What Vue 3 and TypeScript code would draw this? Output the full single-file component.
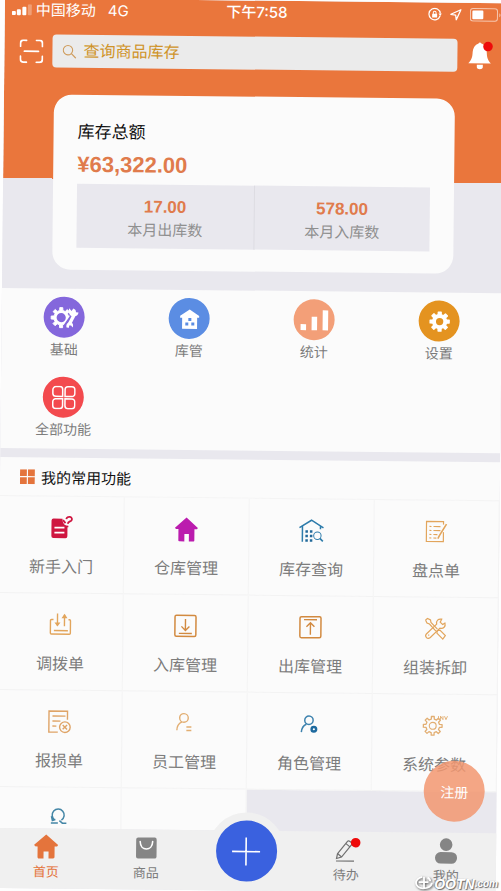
<script setup lang="ts">
import { ref } from 'vue'

interface Item {
  id: string
  label: string
}

const keyword = ref<string>('')

const stats: { value: string; label: string }[] = [
  { value: '17.00', label: '本月出库数' },
  { value: '578.00', label: '本月入库数' },
]

const shortcuts: Item[] = [
  { id: 'basic', label: '基础' },
  { id: 'store', label: '库管' },
  { id: 'chart', label: '统计' },
  { id: 'setting', label: '设置' },
  { id: 'all', label: '全部功能' },
]

const features: Item[] = [
  { id: 'guide', label: '新手入门' },
  { id: 'house', label: '仓库管理' },
  { id: 'query', label: '库存查询' },
  { id: 'check', label: '盘点单' },
  { id: 'transfer', label: '调拨单' },
  { id: 'inbound', label: '入库管理' },
  { id: 'outbound', label: '出库管理' },
  { id: 'assemble', label: '组装拆卸' },
  { id: 'damage', label: '报损单' },
  { id: 'staff', label: '员工管理' },
  { id: 'role', label: '角色管理' },
  { id: 'params', label: '系统参数' },
  { id: 'reset', label: '' },
  { id: 'blank', label: '' },
]

// Outline of a cog centred on (12, 12)
function cog(teeth: number, outer: number, inner: number): string {
  const step = (Math.PI * 2) / teeth
  const points: string[] = []
  for (let i = 0; i < teeth; i++) {
    const a = i * step - Math.PI / 2
    const corners: [number, number][] = [
      [-0.28, inner],
      [-0.19, outer],
      [0.19, outer],
      [0.28, inner],
    ]
    for (const [offset, r] of corners) {
      const t = a + offset * step
      points.push(`${(12 + r * Math.cos(t)).toFixed(2)} ${(12 + r * Math.sin(t)).toFixed(2)}`)
    }
  }
  return `M${points.join('L')}Z`
}

const cogPath = cog(8, 11, 8)
</script>

<template>
  <div class="page">
    <div class="phone">
      <main class="content">
        <header class="hero">
          <div class="status">
            <span class="status-group">
              <svg class="signal" viewBox="0 0 20 12" aria-hidden="true">
                <rect x="0" y="7" width="4" height="4" rx="1" fill="#fff" />
                <rect x="5" y="5" width="4" height="6" rx="1" fill="#fff" />
                <rect x="10.500" y="2.500" width="4" height="8.500" rx="1" fill="#fff" />
                <rect x="16" y="0" width="4" height="11" rx="1" fill="#fff" opacity=".3" />
              </svg>
              <span class="carrier">中国移动</span>
              <span>4G</span>
            </span>
            <span class="time">下午7:58</span>
            <span class="status-group status-icons">
              <svg class="lock" viewBox="0 0 14 14" fill="none" stroke="#fff" aria-hidden="true">
                <path d="M12.300 8.200A5.700 5.700 0 1 1 12.500 6" stroke-width="1.200" />
                <path d="M10.600 6h3.400l-1.600 2.400z" fill="#fff" stroke="none" />
                <rect x="4.300" y="6.300" width="5" height="3.800" rx=".5" fill="#fff" stroke="none" />
                <path d="M5.400 6.500V5.200a1.400 1.400 0 0 1 2.800 0v1.300" />
              </svg>
              <svg class="arrow" viewBox="0 0 12 12" fill="none" stroke="#fff" stroke-width="1.300" stroke-linejoin="round" aria-hidden="true">
                <path d="M11 1L1 5.600l4.800.7.700 4.800z" />
              </svg>
              <svg class="battery" viewBox="0 0 32 14" aria-hidden="true">
                <rect x=".6" y=".6" width="27" height="12.500" rx="2.500" fill="none" stroke="#fff" stroke-opacity=".6" />
                <rect x="2.500" y="2.500" width="11" height="8.800" rx="1" fill="#fff" />
                <path d="M29.500 5v4c1.500-.6 1.500-3.400 0-4z" fill="#fff" opacity=".6" />
              </svg>
            </span>
          </div>

          <form class="search-row" @submit.prevent>
            <button type="button" class="icon-button" aria-label="扫一扫">
              <svg class="scan" viewBox="0 0 24 24" fill="none" stroke="#fff" stroke-width="1.800" stroke-linecap="round">
                <path d="M1 7V4a3 3 0 0 1 3-3h3M17 1h3a3 3 0 0 1 3 3v3M23 17v3a3 3 0 0 1-3 3h-3M7 23H4a3 3 0 0 1-3-3v-3M5 12h14" />
              </svg>
            </button>
            <label class="search">
              <svg class="magnifier" viewBox="0 0 14 14" fill="none" stroke="#cf9c5c" stroke-width="1.100" aria-hidden="true">
                <circle cx="5.500" cy="5.500" r="4.700" />
                <path d="M9 9l4.500 4.500" />
              </svg>
              <input v-model="keyword" type="search" placeholder="查询商品库存" aria-label="查询商品库存" />
            </label>
            <button type="button" class="icon-button" aria-label="消息">
              <svg class="bell" viewBox="0 0 28 30">
                <path d="M12 2.500c.5-1.300 2.300-1.300 2.800 0 3.600 1.300 5.200 4.500 5.500 8.700.2 5 1 8 4.200 11.300H2c3.200-3.300 4-6.300 4.200-11.300C6.500 7 8.300 3.800 12 2.500z" fill="#fff" />
                <path d="M10.500 23.800h6v2.500c0 2.500-6 2.500-6 0z" fill="#fff" />
                <circle cx="21.500" cy="5.500" r="4.800" fill="#ee0a0a" />
              </svg>
            </button>
          </form>

          <section class="card">
            <h1>库存总额</h1>
            <p class="total">¥63,322.00</p>
            <dl class="stats">
              <div v-for="stat in stats" :key="stat.label" class="stat">
                <dd>{{ stat.value }}</dd>
                <dt>{{ stat.label }}</dt>
              </div>
            </dl>
          </section>
        </header>

        <nav class="shortcuts" aria-label="功能分类">
          <a v-for="item in shortcuts" :key="item.id" href="#" class="shortcut">
            <span class="badge" :class="item.id">
              <svg v-if="item.id === 'basic'" class="wide" viewBox="0 0 30 24" aria-hidden="true">
                <g transform="translate(.5 1) scale(.92)">
                  <path :d="cogPath" fill="#fff" stroke="#fff" />
                  <circle cx="12" cy="12" r="5" fill="#8467dc" />
                </g>
                <path d="M27 5.500L16 22" stroke="#8467dc" stroke-width="6" />
                <path d="M25 8l-5.500 11" stroke="#fff" stroke-width="3.400" />
                <path d="M19.500 2.500l2.300 2.800 1.800-2.500c2 .7 2.800 2 2.600 3.700l2.600.2c-.2 2.800-2.500 4.400-5 3.800-3.500.2-5.800-3.300-4.300-8z" fill="#fff" />
                <path d="M17 21.800c-.8-3 .8-5.300 3.500-5.300 2.600.2 3.800 2.600 2.600 5.200l-1.800-2.200-1.700.3-.2 2.300z" fill="#fff" />
              </svg>
              <svg v-else-if="item.id === 'store'" viewBox="0 0 24 24" aria-hidden="true">
                <path d="M12 2.500L2.500 9v1.800h2V22h15V10.800h2V9z" fill="#fff" />
                <path d="M10.700 11h3v3h-3zM7.700 15.500h3v3h-3zM13.700 15.500h3v3h-3z" fill="#5b8de3" />
              </svg>
              <svg v-else-if="item.id === 'chart'" class="wide" viewBox="0 0 30 24" aria-hidden="true">
                <path d="M1 16h5.500v6H1zM12 8.500h5.500V22H12zM23 2h5.500v20H23z" fill="#fff" />
              </svg>
              <svg v-else-if="item.id === 'setting'" viewBox="0 0 24 24" aria-hidden="true">
                <g transform="translate(1.500 1.500) scale(.875)">
                  <path :d="cogPath" fill="#fff" stroke="#fff" stroke-width="1.500" stroke-linejoin="round" />
                  <circle cx="12" cy="12" r="4.200" fill="#e49320" />
                </g>
              </svg>
              <svg v-else viewBox="0 0 24 24" fill="none" stroke="#fff" stroke-width="1.500" aria-hidden="true">
                <path d="M4 1h4a2.800 2.800 0 0 1 2.800 2.800v7H4A3 3 0 0 1 1 8V4a3 3 0 0 1 3-3zM16 1h4a3 3 0 0 1 3 3v4a2.800 2.800 0 0 1-3 2.800h-6.800v-7A2.800 2.800 0 0 1 16 1zM4 13.200h6.800v7A2.800 2.800 0 0 1 8 23H4a3 3 0 0 1-3-3v-4a2.800 2.800 0 0 1 3-2.800zM13.200 13.200H20a2.800 2.800 0 0 1 3 2.800v4a3 3 0 0 1-3 3h-4a2.800 2.800 0 0 1-2.800-2.800z" />
              </svg>
            </span>
            <span>{{ item.label }}</span>
          </a>
        </nav>

        <section class="features">
          <h2>
            <svg viewBox="0 0 16 16" fill="#e4743c" aria-hidden="true">
              <path d="M0 0h7.300v7.300H0zM8.500 0h7.300v7.300H8.500zM0 8.500h7.300v7.300H0zM8.500 8.500h7.300v7.300H8.500z" />
            </svg>
            我的常用功能
          </h2>
          <div class="grid">
            <a v-for="item in features" :key="item.id" href="#" class="cell">
              <svg viewBox="0 0 24 24" fill="none" stroke-width="1.200" aria-hidden="true">
                <g v-if="item.id === 'guide'">
                  <path d="M4 3h9c0 4 1.500 6.500 5 7v10.500a2 2 0 0 1-2 2H4a2 2 0 0 1-2-2V5a2 2 0 0 1 2-2z" fill="#cf1640" />
                  <path d="M5 12h10M5 17h10" stroke="#fff" stroke-width="1.800" />
                  <path d="M13.500 4.500l2.500 3M16.800 3.500c.3-1.700 1.800-2.700 3.600-2.300 2 .4 2.600 2.500 1.300 3.800-1.500 1-3 1-3.500 3M18 10v1.600" stroke="#cf1640" stroke-width="1.800" />
                </g>
                <path v-else-if="item.id === 'house'" d="M12 .5L.5 11l1 1.200H4V23.500c0 .8.500 1 1.300 1H10V17h4.500v7.500h4.300c.8 0 1.200-.3 1.200-1V12.200h2.600l.8-1.200z" fill="#bb1cae" />
                <g v-else-if="item.id === 'query'" stroke="#2e7cab">
                  <path d="M0 9.500L12 2l12 7.500M3 8v15.500M21 8v3" stroke-width="1.500" />
                  <path d="M6 12h2.500v2.500H6zM10.500 12H13v2.500h-2.500zM6 16.500h2.500V19H6zM10.500 16.500H13V19h-2.500zM6 21h2.500v2.500H6zM10.500 21H13v2.500h-2.500z" fill="#22699a" stroke="none" />
                  <circle cx="18" cy="17.500" r="3.700" stroke-width="1" />
                  <path d="M20.500 20l3 3" stroke-width="1.600" />
                </g>
                <g v-else-if="item.id === 'check'" stroke="#e2a55c">
                  <path d="M19 12.500V22H2V2h17v3" />
                  <path d="M5 7h2M9 7h7M5 11h2M9 11h7M5 15h2M9 15h4M5 18.500h2M9 18.500h3" />
                  <path d="M22 4.500L15 16l-1.500 3" stroke-width="1.600" />
                </g>
                <g v-else-if="item.id === 'transfer'" stroke="#e2a55c" stroke-width="1.400">
                  <path d="M5 7H3a1 1 0 0 0-1 1v12.500a1 1 0 0 0 1 1h18a1 1 0 0 0 1-1V8a1 1 0 0 0-1-1h-1M5.500 18h14M9 1v12M16 13.500V2" />
                  <path d="M6 10l3 4 3-4zM13 5.500L16 1l3 4.500z" fill="#e2a55c" stroke="none" />
                </g>
                <g v-else-if="item.id === 'inbound'" stroke="#d28a40">
                  <rect x="1.500" y="1.500" width="21" height="21" rx="1.500" stroke-width="1.500" />
                  <path d="M5.500 19.500h13M12 5v11M8 12.500l4 4 4-4" stroke-width="1.400" />
                </g>
                <g v-else-if="item.id === 'outbound'" stroke="#d28a40">
                  <rect x="1.500" y="1.500" width="21" height="21" rx="1.500" stroke-width="1.500" />
                  <path d="M5.500 4.500h13M12 19.500V8M8 11.500l4-4 4 4" stroke-width="1.400" />
                </g>
                <g v-else-if="item.id === 'assemble'" stroke="#e2a55c">
                  <path d="M2 3.500L4 2l3 1.500.5 2.500L14 12.500M2 3.500l1.500 3L6 7.500l6.500 7M14 14l2.500-.5L22 19l-2.500 3.500-6-6z" />
                  <path d="M21.500 6.500l-2.300 1.300-2.500-2.200 1.500-3c-3.500-.7-5.800 1.700-5 5L3 17.500c-2 2.500 1 6 4 3.500l9.500-9.500c3.500.8 6-1.500 5-5z" />
                  <path d="M5 19l.8-.8" />
                </g>
                <g v-else-if="item.id === 'damage'" stroke="#dfa467" stroke-width="1.400">
                  <path d="M20 10V1.500H1.500v21h9M5 6.500h13M5 11.500h8M5 16.500h4" />
                  <circle cx="17.500" cy="17.500" r="5.300" />
                  <path d="M15.300 15.300l4.400 4.400M19.700 15.300l-4.400 4.400" />
                </g>
                <g v-else-if="item.id === 'staff'" stroke="#e2ae72" stroke-width="1.400">
                  <circle cx="11.500" cy="7" r="4.300" />
                  <path d="M4.500 19.500c0-4 2-7 5-8.500M14 16h5M14 19.500h5" />
                </g>
                <g v-else-if="item.id === 'role'" stroke="#3d82ae" stroke-width="1.500">
                  <circle cx="11.500" cy="8" r="4.200" />
                  <path d="M4 20c.3-4 2-6.800 5-8" />
                  <circle cx="16.500" cy="17" r="2.300" fill="#fff" stroke="#1e6a9f" stroke-width="2.400" />
                </g>
                <g v-else-if="item.id === 'params'" stroke="#e2ae72">
                  <g transform="translate(0 2) scale(.86)">
                    <path :d="cogPath" stroke-width="1.500" stroke-linejoin="round" />
                    <circle cx="12" cy="12" r="4" stroke-width="1.300" />
                  </g>
                  <path d="M16 2.500V6M18 6V2.500L20.500 6V2.500M22 2.500L23.500 6 25 2.500" stroke-width=".9" />
                </g>
                <g v-else-if="item.id === 'reset'" stroke="#4486a6" stroke-width="1.500">
                  <path d="M8.500 13.500A6 6 0 1 1 15 13.500M5 9.500l1 4.500 3-1M4.500 16.500h7M13 14l3 2.500h4" />
                </g>
              </svg>
              <span>{{ item.label }}</span>
            </a>
          </div>
        </section>
      </main>

      <nav class="tabbar" aria-label="主导航">
        <a href="#" class="tab active">
          <svg viewBox="0 0 26 26" aria-hidden="true">
            <path d="M13 1L1 11.500l1 1.500h2.500v10.500c0 .8.500 1.500 1.400 1.500H10.500v-7h5v7h4.600c.9 0 1.400-.7 1.400-1.500V13H24l1-1.500z" fill="#e4743c" />
          </svg>
          <span>首页</span>
        </a>
        <a href="#" class="tab">
          <svg viewBox="0 0 26 26" aria-hidden="true">
            <rect x="3" y="3" width="20.500" height="21" rx="2" fill="#858585" />
            <path d="M7 7c.3 10 12.200 10 12.500 0" fill="none" stroke="#fff" stroke-width="1.600" stroke-linecap="round" />
          </svg>
          <span>商品</span>
        </a>
        <div class="tab">
          <button type="button" class="add" aria-label="新增">
            <svg viewBox="0 0 28 28" stroke="#fff" stroke-width="1.600"><path d="M14 0v28M0 14h28" /></svg>
          </button>
        </div>
        <a href="#" class="tab">
          <svg viewBox="0 0 26 26" fill="none" stroke="#6f6f6f" stroke-width="1.200" aria-hidden="true">
            <path d="M4.500 17L14.500 4.500c1-1 5 1.500 4.200 3.200L8.500 20.500 3.500 22zM12.800 7l4 3.200M4.500 17l4 3.500M3 24.500h18" />
            <circle cx="22.500" cy="6" r="4.800" fill="#ee0a0a" stroke="none" />
          </svg>
          <span>待办</span>
        </a>
        <a href="#" class="tab">
          <svg viewBox="0 0 26 26" fill="#858585" aria-hidden="true">
            <circle cx="13" cy="7" r="6.300" />
            <rect x="2" y="14.500" width="22" height="11.500" rx="5.500" />
          </svg>
          <span>我的</span>
        </a>
      </nav>

      <button type="button" class="register">注册</button>
    </div>

    <div class="mark">
      <svg viewBox="0 0 20 18" fill="none" stroke="#fff" stroke-width="2" aria-hidden="true">
        <path d="M8 2C4 3 1 6 1 9s3 6 8 6c5 0 9-2.500 10-6M4 8h11M10 2v13M14 3c2 1 3 2.500 3 4" />
      </svg>
      <span class="mark-name">OOTN</span>
      <span class="mark-suffix">.com</span>
    </div>
  </div>
</template>

<style>
body {
  margin: 0;
  background: #fefefe;
}
</style>

<style scoped>
* {
  box-sizing: border-box;
}

.page {
  position: relative;
  height: 100vh;
  overflow: hidden;
  font-family: "Liberation Sans", "Noto Sans CJK SC", sans-serif;
  color: #7c7c7c;
}

.phone {
  position: relative;
  display: flex;
  flex-direction: column;
  height: calc(100vh - 1px);
  margin: -2px -4px 0 5px;
  transform: rotate(0.6deg);
  transform-origin: 0 0;
  background: #e9e8ee;
}

.content {
  flex: 1;
  min-height: 0;
  overflow: hidden;
}

a {
  color: inherit;
  text-decoration: none;
}

button {
  border: 0;
  padding: 0;
  background: none;
  font: inherit;
  color: inherit;
}

svg {
  display: block;
  flex: none;
}

.hero {
  background: linear-gradient(#ea763c 180px, #e9e8ee 180px);
  padding-bottom: 19px;
}

.status {
  display: grid;
  grid-template-columns: 1fr auto 1fr;
  align-items: center;
  height: 24px;
  padding: 0 3px 0 7px;
  font-family: Inter, "Noto Sans CJK SC", sans-serif;
  font-size: 15px;
  line-height: 24px;
  color: #fff;
}

.status-group {
  display: flex;
  align-items: center;
}

.signal {
  width: 20px;
  height: 12px;
}

.carrier {
  margin: 0 12px 0 4px;
}

.time {
  font-weight: 500;
}

.status-icons {
  justify-content: flex-end;
  gap: 8px;
}

.lock {
  width: 14px;
  height: 14px;
}

.arrow {
  width: 12px;
  height: 12px;
}

.battery {
  width: 32px;
  height: 14px;
}

.search-row {
  display: flex;
  align-items: center;
  gap: 9px;
  padding: 0 10px 0 15px;
  margin: 12px 0 27px;
}

.scan {
  width: 24px;
  height: 24px;
}

.bell {
  width: 28px;
  height: 30px;
}

.search {
  flex: 1;
  display: flex;
  align-items: center;
  gap: 7px;
  height: 33px;
  padding: 0 10px;
  border-radius: 4px;
  background: #ebebeb;
}

.magnifier {
  width: 14px;
  height: 14px;
}

.search input {
  flex: 1;
  min-width: 0;
  border: 0;
  padding: 0;
  outline: 0;
  background: none;
  font: inherit;
  font-size: 16px;
  color: #cf9328;
}

.search input::placeholder {
  color: #cf9328;
  opacity: 1;
}

.card {
  margin: 0 49px 0 50px;
  padding: 24px 24px 22px;
  border-radius: 18px;
  background: #fbfbfb;
}

.card h1 {
  margin: 0;
  font-size: 17px;
  font-weight: 400;
  line-height: 28px;
  color: #111;
}

.total {
  margin: 4px 0 6px;
  font-size: 22px;
  font-weight: 700;
  line-height: 27px;
  color: #e07b4c;
}

.stats {
  display: grid;
  grid-template-columns: 1fr 1fr;
  margin: 0;
  background: #e9e8ee;
}

.stat {
  padding: 12px 0 6px;
  text-align: center;
}

.stat + .stat {
  border-left: 1px solid #dddce2;
}

.stat dd {
  margin: 0;
  font-size: 17px;
  font-weight: 700;
  line-height: 22px;
  color: #e07b4c;
}

.stat dt {
  font-size: 15px;
  line-height: 24px;
  color: #8f8f8f;
}

.shortcuts {
  display: grid;
  grid-template-columns: repeat(4, 1fr);
  row-gap: 17px;
  padding: 8px 0 9px;
  background: #fbfbfb;
}

.shortcut {
  display: flex;
  flex-direction: column;
  align-items: center;
  gap: 2px;
  font-size: 14px;
  line-height: 20px;
}

.badge {
  display: grid;
  place-items: center;
  width: 41px;
  height: 41px;
  border-radius: 50%;
}

.badge svg {
  width: 24px;
  height: 24px;
}

.badge .wide {
  width: 30px;
}

.basic {
  background: #8467dc;
}

.store {
  background: #5b8de3;
}

.chart {
  background: #f39f78;
}

.setting {
  background: #e49320;
}

.all {
  background: #f34a4e;
}

.features {
  margin-top: 9px;
}

.features h2 {
  display: flex;
  align-items: center;
  gap: 6px;
  height: 39px;
  margin: 0;
  padding-left: 20px;
  border-bottom: 1px solid #f4f4f4;
  background: #fbfbfb;
  font-size: 15px;
  font-weight: 400;
  color: #111;
}

.features h2 svg {
  width: 15px;
  height: 15px;
}

.grid {
  display: grid;
  grid-template-columns: repeat(4, 1fr);
}

.cell {
  display: flex;
  flex-direction: column;
  align-items: center;
  gap: 17px;
  height: 97px;
  padding-top: 19px;
  border-right: 1px solid #f3f3f3;
  border-bottom: 1px solid #f3f3f3;
  background: #fbfbfb;
  font-size: 16px;
  line-height: 22px;
}

.cell svg {
  width: 24px;
  height: 24px;
  overflow: visible;
}

.tabbar {
  position: relative;
  display: grid;
  grid-template-columns: repeat(5, 1fr);
  height: 60px;
  background: #f0f0f0;
}

.tab {
  display: flex;
  flex-direction: column;
  align-items: center;
  gap: 3px;
  padding-top: 5px;
  font-size: 13px;
  line-height: 20px;
}

.tab svg {
  width: 26px;
  height: 26px;
  overflow: visible;
}

.active {
  color: #e4743c;
}

.add {
  position: absolute;
  top: -18px;
  display: grid;
  place-items: center;
  width: 77px;
  height: 77px;
  border: 8px solid #f0f0f0;
  border-radius: 50%;
  background: #3a61df;
}

.add svg {
  width: 28px;
  height: 28px;
}

.register {
  position: absolute;
  right: 12px;
  bottom: 71px;
  width: 61px;
  height: 61px;
  border-radius: 50%;
  background: rgba(242, 150, 112, 0.85);
  font-size: 14px;
  color: #fff;
}

.mark {
  position: absolute;
  right: 3px;
  bottom: 0;
  display: flex;
  align-items: flex-end;
  color: #fff;
  font-style: italic;
  font-weight: 700;
  text-shadow: 1px 1px 1px #666, -1px 0 1px #999;
}

.mark svg {
  width: 20px;
  height: 16px;
  filter: drop-shadow(1px 1px 1px #555);
}

.mark-name {
  font-size: 14px;
  line-height: 14px;
}

.mark-suffix {
  font-size: 10px;
  line-height: 14px;
}
</style>
